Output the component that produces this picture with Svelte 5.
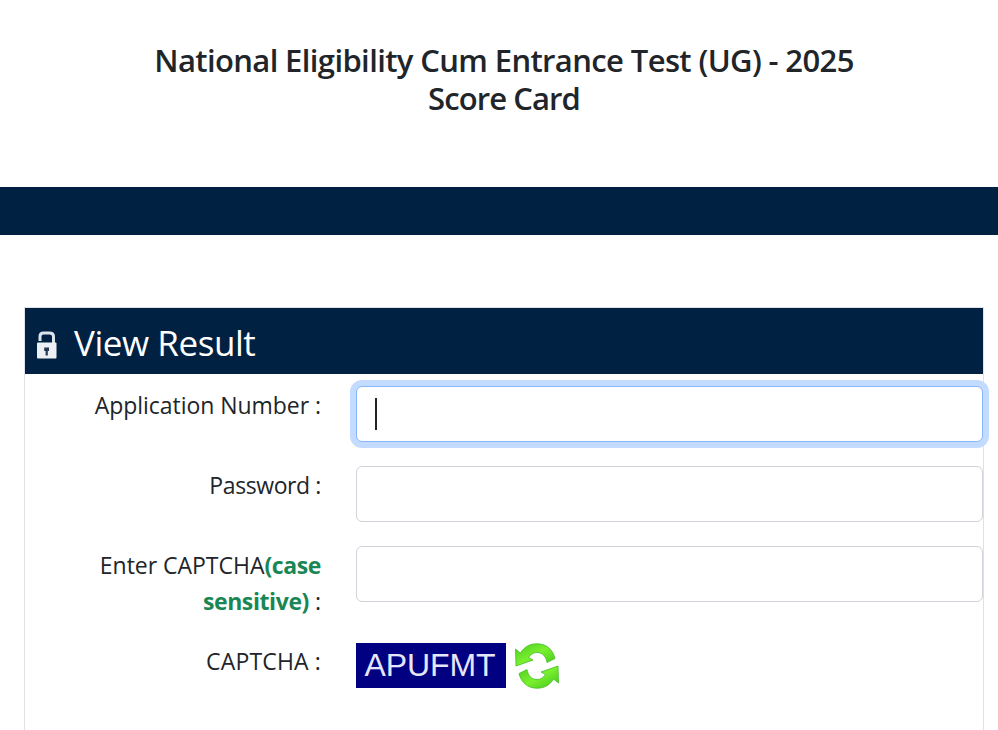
<script lang="ts">
	let applicationNumber = $state('');
	let password = $state('');
	let captcha = $state('');
	const captchaText = 'APUFMT';
</script>

<header>
	<h1>
		<span class="title">National Eligibility Cum Entrance Test (UG) - 2025</span>
		<span class="subtitle">Score Card</span>
	</h1>
</header>
<nav></nav>

<main>
	<div class="card-header">
		<svg class="lock" viewBox="0 0 22 28" width="22" height="28">
			<path d="M4 10V5.500Q4 2 7.500 2h6Q17.500 2 17.500 5.500V14" fill="none" stroke="#dce3ea" stroke-width="3" />
			<rect x="1" y="11.500" width="19.500" height="16" rx="1" fill="#eceff3" />
			<path d="M8.200 16.500h4.800v3.500h-1.200v4.500h-2.200V20H8.200z" fill="#26384f" />
		</svg>
		<h2>View Result</h2>
	</div>
	<form>
		<div class="row">
			<label for="appno"><span class="l-app">Application Number :</span></label>
			<div class="input focused">
				<span class="caret"></span>
				<input id="appno" type="text" bind:value={applicationNumber} />
			</div>
		</div>
		<div class="row">
			<label for="password"><span class="l-pass">Password :</span></label>
			<div class="input"><input id="password" type="password" bind:value={password} /></div>
		</div>
		<div class="row captcha-row">
			<label for="captcha">
				<span class="l-enter">Enter CAPTCHA</span><b class="l-case">(case</b><br />
				<b class="l-sens">sensitive)</b>&nbsp;:
			</label>
			<div class="input"><input id="captcha" type="text" bind:value={captcha} /></div>
		</div>
		<div class="row last">
			<span class="label"><span class="l-cap">CAPTCHA :</span></span>
			<div class="captcha">
				<div class="code">{captchaText}</div>
				<button type="button" aria-label="Refresh">
					<svg viewBox="0 0 46 46" width="46" height="46">
						<defs>
							<linearGradient id="green" x1="0" y1="0" x2="1" y2="1">
								<stop offset="0" stop-color="#4ccb20" />
								<stop offset="0.500" stop-color="#7af02e" />
								<stop offset="1" stop-color="#3fc51c" />
							</linearGradient>
						</defs>
						<g fill="url(#green)" stroke="#45bd23" stroke-width="0.800" stroke-linejoin="round">
							<path d="M1.500 6l5 4C10 4 16 .6 23 .8c9.500 0 16 6 18 14.700l-8 4C32 13.500 28.500 9.500 23 9.500c-4 0-6.500 2-8.500 5l4.500 2.500L2 23z" />
							<path d="M44.500 40l-5-4C36 42 30 45.400 23 45.200c-9.500 0-16-6-18-14.700l8-4C14 32.500 17.500 36.500 23 36.500c4 0 6.500-2 8.500-5l-4.500-2.500L44 23z" />
						</g>
					</svg>
				</button>
			</div>
		</div>
	</form>
</main>

<style>
	:global(body) {
		margin: 0;
		height: 730px;
		overflow: hidden;
		background: #fff;
		color: #212529;
		font-family: 'Open Sans', 'Noto Sans', sans-serif;
	}

	header {
		height: 187px;
		padding: 41px 0 0 10px;
		box-sizing: border-box;
	}

	h1 {
		margin: 0;
		display: flex;
		flex-direction: column;
		align-items: center;
		font-size: 31px;
		font-weight: 560;
		line-height: 38px;
		white-space: nowrap;
	}

	.title {
		letter-spacing: -0.620px;
	}

	.subtitle {
		letter-spacing: -0.900px;
	}

	nav {
		height: 48px;
		background: #002142;
	}

	main {
		margin: 72px 14px 0 24px;
		height: 440px;
		border: 1px solid #dee2e6;
		box-sizing: border-box;
	}

	.card-header {
		display: flex;
		height: 66px;
		background: #002142;
		color: #fff;
	}

	.lock {
		margin: 23px 0 0 11px;
	}

	h2 {
		margin: 12px 0 0 16px;
		font-size: 35px;
		font-weight: 400;
		line-height: 46px;
		letter-spacing: -0.450px;
		white-space: nowrap;
	}

	form {
		padding-top: 12px;
	}

	.row {
		display: grid;
		grid-template-columns: 296px 627px;
		column-gap: 35px;
		height: 80px;
	}

	.captcha-row {
		height: 97px;
	}

	label,
	.label {
		padding-top: 1px;
		text-align: right;
		font-size: 23px;
		line-height: 36px;
		white-space: nowrap;
	}

	.last .label {
		padding-top: 0;
	}

	.l-app {
		letter-spacing: -0.040px;
	}

	.l-pass {
		letter-spacing: -0.400px;
	}

	.l-enter {
		letter-spacing: -0.020px;
	}

	.l-case {
		letter-spacing: -0.400px;
	}

	.l-sens {
		letter-spacing: -0.400px;
	}

	.l-cap {
		letter-spacing: 0.150px;
	}

	.input {
		display: flex;
		align-items: center;
		height: 56px;
		box-sizing: border-box;
		padding: 0 18px;
		border: 1px solid #ced4da;
		border-radius: 6px;
		background: #fff;
	}

	.focused {
		border-color: #86b7fe;
		box-shadow: 0 0 0 6px #c2dbfe;
	}

	.caret {
		width: 2px;
		height: 32px;
		background: #212529;
	}

	input {
		flex: 1;
		min-width: 0;
		border: 0;
		padding: 0;
		outline: none;
		background: transparent;
		font: inherit;
		font-size: 24px;
	}

	b {
		color: #198754;
		font-weight: 700;
	}

	.captcha {
		display: flex;
		gap: 8px;
	}

	.code {
		width: 150px;
		height: 45px;
		background: #000080;
		color: #e6e6fa;
		font: 32px/45px 'Liberation Sans', Arial, sans-serif;
		letter-spacing: -0.100px;
		text-indent: -2px;
		text-align: center;
	}

	button {
		height: 46px;
		padding: 0;
		border: 0;
		background: none;
	}

	button svg {
		display: block;
		margin-top: -1px;
	}
</style>
